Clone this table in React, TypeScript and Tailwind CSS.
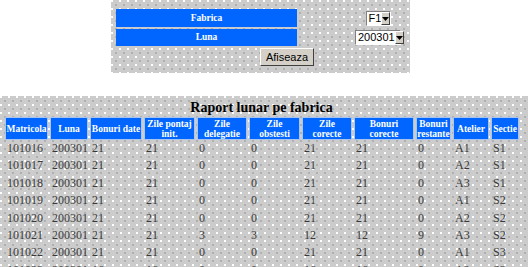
const dots =
  "bg-[#cccccc] bg-[radial-gradient(circle_at_1px_1px,#ffffff_0.9px,transparent_1px),radial-gradient(circle_at_5px_5px,#b0b0b0_0.9px,transparent_1px)] bg-size-[8px_8px]";

const cols = "grid grid-cols-[43px_38px_52px_51px_50px_51px_50px_60px_35px_36px_28px] gap-x-[2px]";

const headers = [
  ["Matricola"],
  ["Luna"],
  ["Bonuri date"],
  ["Zile pontaj", "init."],
  ["Zile", "delegatie"],
  ["Zile", "obstesti"],
  ["Zile", "corecte"],
  ["Bonuri", "corecte"],
  ["Bonuri", "restante"],
  ["Atelier"],
  ["Sectie"],
];

const rows = [
  ["101016", "200301", "21", "21", "0", "0", "21", "21", "0", "A1", "S1"],
  ["101017", "200301", "21", "21", "0", "0", "21", "21", "0", "A2", "S1"],
  ["101018", "200301", "21", "21", "0", "0", "21", "21", "0", "A3", "S1"],
  ["101019", "200301", "21", "21", "0", "0", "21", "21", "0", "A1", "S2"],
  ["101020", "200301", "21", "21", "0", "0", "21", "21", "0", "A2", "S2"],
  ["101021", "200301", "21", "21", "3", "3", "12", "12", "9", "A3", "S2"],
  ["101022", "200301", "21", "21", "0", "0", "21", "21", "0", "A1", "S3"],
  ["101023", "200301", "16", "16", "0", "0", "16", "16", "0", "A2", "S3"],
];

function Select({ value, width }: { value: string; width: string }) {
  return (
    <div className={`flex h-[15px] ${width} items-stretch border border-t-[#808080] border-l-[#808080] border-r-white border-b-white bg-white`}>
      <span className="flex-1 pl-[2px] text-[11px] leading-[13px] text-black font-['Liberation_Sans',sans-serif]">{value}</span>
      <span className="flex w-[12px] items-center justify-center border border-t-white border-l-white border-r-[#404040] border-b-[#404040] bg-[#d4d0c8]">
        <svg width="7" height="4" viewBox="0 0 7 4">
          <path d="M0 0h7L3.5 4z" fill="#000" />
        </svg>
      </span>
    </div>
  );
}

export default function App() {
  return (
    <div className="flex h-[267px] w-[528px] flex-col overflow-hidden bg-white font-['Liberation_Serif',serif]">
      <div className={`ml-[111px] flex h-[73px] w-[299px] shrink-0 flex-col pl-[5px] pt-[9px] ${dots}`}>
        <div className="flex items-center">
          <div className="flex h-[18px] w-[181px] items-center justify-center bg-[#0066ff] font-['Liberation_Serif',serif] text-[9.5px] font-bold text-white">Fabrica</div>
          <div className="ml-auto flex w-[64px] justify-center pt-[1px]">
            <Select value="F1" width="w-[25px]" />
          </div>
        </div>
        <div className="mt-[2px] flex items-center">
          <div className="flex h-[17px] w-[181px] items-center justify-center bg-[#0066ff] font-['Liberation_Serif',serif] text-[9.5px] font-bold text-white">Luna</div>
          <div className="ml-auto flex w-[64px] justify-center">
            <Select value="200301" width="w-[46px]" />
          </div>
        </div>
        <div className="mt-[2px] pl-[144px]">
          <button className="flex h-[18px] w-[54px] items-center justify-center border border-t-white border-l-white border-r-[#404040] border-b-[#404040] bg-[#d4d0c8] text-[11px] text-black font-['Liberation_Sans',sans-serif]">
            Afiseaza
          </button>
        </div>
      </div>

      <div className={`mt-[23px] flex-1 pl-[5px] ${dots}`}>
        <div className="mt-[2px] h-[19px] pr-[10px] text-center text-[14px] font-bold leading-[19px] text-black">Raport lunar pe fabrica</div>
        <div className={cols}>
          {headers.map((h) => (
            <div
              key={h.join(" ")}
              className="flex h-[23px] flex-col items-center justify-center border border-[#a8c4f0] bg-[#0066ff] font-['Liberation_Serif',serif] text-[9.5px] font-bold leading-[10px] text-white"
            >
              {h.map((l) => (
                <span key={l} className="whitespace-nowrap">{l}</span>
              ))}
            </div>
          ))}
        </div>
        {rows.map((r) => (
          <div key={r[0]} className={`${cols} h-[17.4px]`}>
            {r.map((c, i) => (
              <div key={i} className="pl-[2px] text-[12px] leading-[17.4px] text-[#3a3a3a]">
                {c}
              </div>
            ))}
          </div>
        ))}
      </div>
    </div>
  );
}
